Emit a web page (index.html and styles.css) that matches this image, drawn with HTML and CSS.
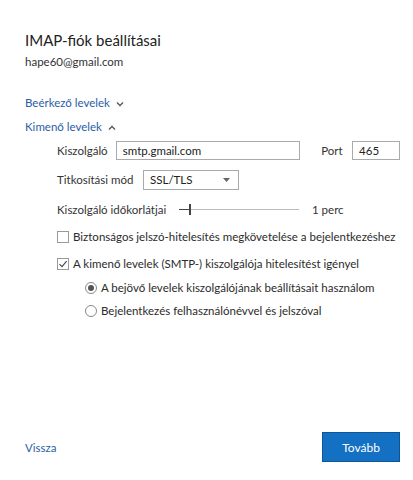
FILE: index.html
```html
<!DOCTYPE html>
<html lang="hu">
<head>
<meta charset="utf-8">
<link rel="stylesheet" href="styles.css">
</head>
<body>
<div class="dialog">
  <h1 class="title">IMAP-fiók beállításai</h1>
  <div class="email">hape60@gmail.com</div>

  <div class="toggle toggle-first">Beérkező levelek
    <svg class="chev" width="8" height="6" viewBox="0 0 8 6"><path d="M1 1.5 L4 4.5 L7 1.5" fill="none" stroke="#555" stroke-width="1.3"/></svg>
  </div>
  <div class="toggle">Kimenő levelek
    <svg class="chev" width="8" height="6" viewBox="0 0 8 6"><path d="M1 4.5 L4 1.5 L7 4.5" fill="none" stroke="#555" stroke-width="1.3"/></svg>
  </div>

  <div class="settings">
    <div class="row row-server">
      <span class="label lbl-server">Kiszolgáló</span>
      <div class="input input-server">smtp.gmail.com</div>
      <span class="label lbl-port">Port</span>
      <div class="input input-port">465</div>
    </div>
    <div class="row row-enc">
      <span class="label lbl-enc">Titkosítási mód</span>
      <div class="select">SSL/TLS
        <svg class="caret" width="7" height="4" viewBox="0 0 7 4"><path d="M0 0 H7 L3.5 4 Z" fill="#666"/></svg>
      </div>
    </div>
    <div class="row row-timeout">
      <span class="label lbl-timeout">Kiszolgáló időkorlátjai</span>
      <div class="slider"><div class="slider-fill"></div><div class="slider-thumb"></div></div>
      <span class="label">1 perc</span>
    </div>

    <div class="check-row check-first">
      <span class="checkbox"></span>
      <span>Biztonságos jelszó-hitelesítés megkövetelése a bejelentkezéshez</span>
    </div>
    <div class="check-row">
      <span class="checkbox checked">
        <svg width="10" height="10" viewBox="0 0 10 10"><path d="M1.5 5.2 L4 7.6 L8.6 2.2" fill="none" stroke="#444" stroke-width="1.1"/></svg>
      </span>
      <span>A kimenő levelek (SMTP-) kiszolgálója hitelesítést igényel</span>
    </div>
    <div class="radio-group">
      <div class="radio-row">
        <span class="radio selected"></span>
        <span>A bejövő levelek kiszolgálójának beállításait használom</span>
      </div>
      <div class="radio-row">
        <span class="radio"></span>
        <span>Bejelentkezés felhasználónévvel és jelszóval</span>
      </div>
    </div>
  </div>

  <div class="footer">
    <span class="back">Vissza</span>
    <button class="next">Tovább</button>
  </div>
</div>
</body>
</html>
```

FILE: styles.css
```css
html, body {
  margin: 0;
  padding: 0;
  background: #fff;
}
body {
  font-family: Lato, "Noto Sans", sans-serif;
  color: #2b2b2b;
  font-size: 11.5px;
}
.dialog {
  width: 413px;
  height: 480px;
  box-sizing: border-box;
  padding: 29px 13px 0 25px;
  display: flex;
  flex-direction: column;
}
.title {
  margin: 0;
  font-size: 15px;
  font-weight: normal;
  line-height: 22px;
  color: #222;
}
.email {
  margin-top: 3px;
  line-height: 16px;
  color: #333;
}
.toggle {
  color: #2a5ea6;
  line-height: 16px;
  display: flex;
  align-items: center;
  gap: 6px;
  margin-top: 8px;
}
.toggle-first {
  margin-top: 25px;
}
.chev {
  margin-top: 1px;
}
.settings {
  padding-left: 32px;
  margin-top: 6px;
}
.row {
  display: flex;
  align-items: center;
  height: 19px;
}
.row-enc {
  margin-top: 10px;
}
.row-timeout {
  margin-top: 11px;
}
.label {
  white-space: nowrap;
  color: #333;
}
.lbl-server { width: 59px; }
.lbl-port { width: 31px; margin-left: 21px; }
.lbl-enc { width: 86px; }
.lbl-timeout { width: 122px; }
.input, .select {
  box-sizing: border-box;
  height: 19px;
  border: 1px solid #aaa;
  padding: 0 6px;
  line-height: 17px;
  color: #222;
  background: #fff;
}
.input-server { width: 185px; }
.input-port { width: 48px; }
.select {
  width: 96px;
  display: flex;
  align-items: center;
  justify-content: space-between;
  padding-right: 8px;
  height: 20px;
}
.slider {
  position: relative;
  width: 120px;
  height: 11px;
  margin-right: 13px;
}
.slider::before {
  content: "";
  position: absolute;
  left: 0;
  right: 0;
  top: 5px;
  height: 1px;
  background: #bbb;
}
.slider-fill {
  position: absolute;
  left: 0;
  width: 11px;
  top: 5px;
  height: 1px;
  background: #444;
}
.slider-thumb {
  position: absolute;
  left: 10px;
  top: 0;
  width: 2px;
  height: 11px;
  background: #444;
}
.check-row, .radio-row {
  display: flex;
  align-items: center;
  gap: 4px;
  line-height: 16px;
  color: #2b2b2b;
  white-space: nowrap;
}
.check-first {
  margin-top: 10px;
}
.check-row + .check-row {
  margin-top: 11px;
}
.checkbox {
  box-sizing: border-box;
  width: 12px;
  height: 12px;
  border: 1px solid #999;
  background: #fff;
  display: flex;
  align-items: center;
  justify-content: center;
  flex: none;
}
.radio-group {
  padding-left: 28px;
  margin-top: 8px;
}
.radio-row + .radio-row {
  margin-top: 7px;
}
.radio {
  box-sizing: border-box;
  width: 12px;
  height: 12px;
  border: 1px solid #888;
  border-radius: 50%;
  background: #fff;
  display: flex;
  align-items: center;
  justify-content: center;
  flex: none;
}
.radio.selected::after {
  content: "";
  width: 6px;
  height: 6px;
  border-radius: 50%;
  background: #555;
}
.footer {
  margin-top: auto;
  margin-bottom: 18px;
  display: flex;
  align-items: center;
  justify-content: space-between;
}
.back {
  color: #2a5ea6;
}
.next {
  font-family: inherit;
  font-size: 12px;
  width: 78px;
  height: 30px;
  background: #1470c2;
  border: 1px solid #0c5599;
  color: #fff;
  padding: 0;
}
```
